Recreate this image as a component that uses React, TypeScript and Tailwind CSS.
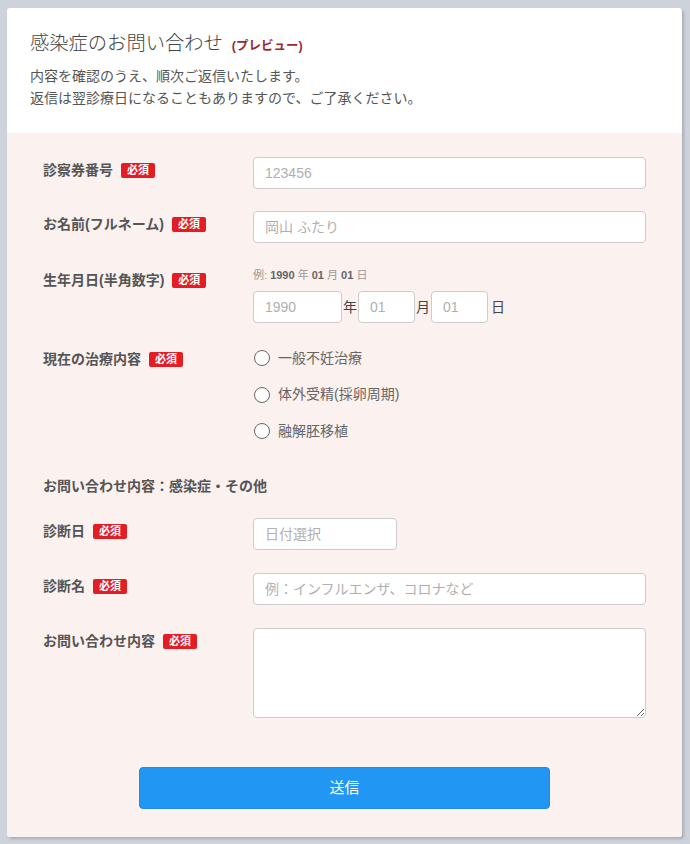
import React from "react";

const font = "font-['Liberation_Sans','Noto_Sans_CJK_JP',sans-serif]";

const Badge = () => (
  <span className="ml-2 inline-flex h-[15px] items-center rounded-[2px] bg-[#e41c24] px-[6px] text-[11px] font-bold leading-none text-white">
    必須
  </span>
);

const Label = ({ text, required = true }: { text: string; required?: boolean }) => (
  <div className="flex w-[210px] shrink-0 items-center self-start pt-[3px] text-[14px] font-bold leading-[20px] text-[#555]">
    <span>{text}</span>
    {required && <Badge />}
  </div>
);

const inputCls =
  "h-[32px] rounded-[4px] border border-[#cccccc] bg-white px-[11px] text-[14px] text-[#333] outline-none placeholder:text-[#b0b0b0]";

const Radio = ({ text }: { text: string }) => (
  <label className="flex h-[24px] items-center gap-[8px] text-[14px] text-[#666]">
    <span className="h-[16px] w-[16px] rounded-full border-[1.5px] border-[#666] bg-white" />
    <span>{text}</span>
  </label>
);

const App = () => {
  return (
    <div className={`min-h-[844px] bg-[#ced2db] pl-[7px] pr-[8px] pt-[8px] ${font}`}>
      <div className="overflow-hidden rounded-[3px] bg-white shadow-[2px_2px_3px_rgba(0,0,0,0.18)]">
        <div className="px-[23px] pb-[24px] pt-[21px]">
          <h1 className="flex items-baseline text-[19.3px] font-light leading-[30px] text-[#444]">
            感染症のお問い合わせ
            <span className="ml-[9px] text-[12.5px] font-bold text-[#9b2a2e]">(プレビュー)</span>
          </h1>
          <p className="mt-[4px] text-[14px] leading-[22px] text-[#555]">
            内容を確認のうえ、順次ご返信いたします。
            <br />
            返信は翌診療日になることもありますので、ご了承ください。
          </p>
        </div>

        <div className="bg-[#fbf1ef] px-[36px] pb-[28px] pt-[24px]">
          <div className="flex">
            <Label text="診察券番号" />
            <input className={`${inputCls} w-[393px]`} placeholder="123456" />
          </div>

          <div className="mt-[22px] flex">
            <Label text="お名前(フルネーム)" />
            <input className={`${inputCls} w-[393px]`} placeholder="岡山 ふたり" />
          </div>

          <div className="mt-[24px] flex">
            <Label text="生年月日(半角数字)" />
            <div>
              <div className="text-[11px] leading-[16px] text-[#999]">
                例: <b className="text-[#666]">1990</b> 年 <b className="text-[#666]">01</b> 月{" "}
                <b className="text-[#666]">01</b> 日
              </div>
              <div className="mt-[8px] flex items-center text-[14px] text-[#444]">
                <input className={`${inputCls} w-[89px]`} placeholder="1990" />
                <span className="mx-[1px]">年</span>
                <input className={`${inputCls} w-[57px]`} placeholder="01" />
                <span className="mx-[1px]">月</span>
                <input className={`${inputCls} w-[57px]`} placeholder="01" />
                <span className="ml-[3px]">日</span>
              </div>
            </div>
          </div>

          <div className="mt-[23px] flex">
            <Label text="現在の治療内容" />
            <div className="flex flex-col gap-[12.5px] pl-[1px]">
              <Radio text="一般不妊治療" />
              <Radio text="体外受精(採卵周期)" />
              <Radio text="融解胚移植" />
            </div>
          </div>

          <div className="mt-[33px] text-[14px] font-bold leading-[20px] text-[#555]">
            お問い合わせ内容：感染症・その他
          </div>

          <div className="mt-[22px] flex">
            <Label text="診断日" />
            <input className={`${inputCls} w-[144px]`} placeholder="日付選択" />
          </div>

          <div className="mt-[23px] flex">
            <Label text="診断名" />
            <input className={`${inputCls} w-[393px]`} placeholder="例：インフルエンザ、コロナなど" />
          </div>

          <div className="mt-[23px] flex">
            <Label text="お問い合わせ内容" />
            <textarea className="h-[90px] w-[393px] rounded-[4px] border border-[#cccccc] bg-white px-[11px] py-[6px] text-[14px] outline-none" />
          </div>

          <div className="mt-[49px] flex justify-center">
            <button className="h-[42px] w-[411px] rounded-[4px] border border-[#1c8ce6] bg-[#2196f3] text-[15px] text-white">
              送信
            </button>
          </div>
        </div>
      </div>
    </div>
  );
};

export default App;
